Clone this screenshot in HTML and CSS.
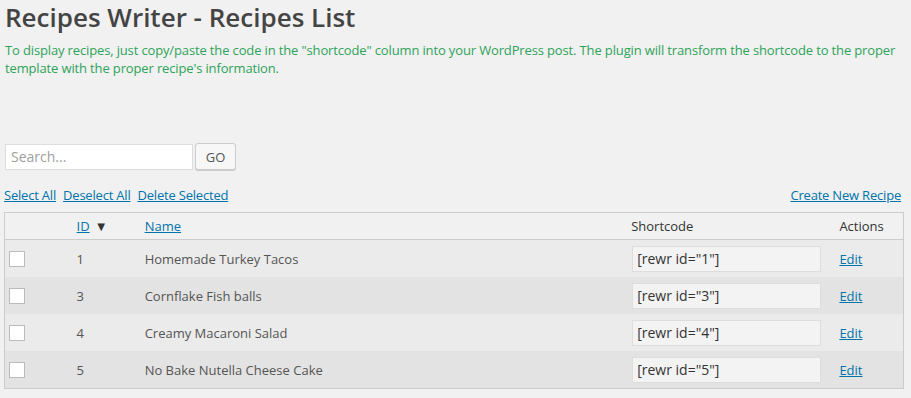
FILE: index.html
```html
<!DOCTYPE html>
<html lang="en">
<head>
  <meta charset="UTF-8" />
  <title>Recipes Writer - Recipes List</title>
  <link rel="stylesheet" href="styles.css">
</head>
<body>
  <div class="wrap">
    <h1>Recipes Writer - Recipes List</h1>
    <p class="intro">To display recipes, just copy/paste the code in the "shortcode" column into your WordPress post. The plugin will transform the shortcode to the proper template with the proper recipe's information.</p>

    <form class="search-box">
      <input type="text" class="search-input" placeholder="Search...">
      <button type="button" class="go-btn">GO</button>
    </form>

    <div class="bulk-row">
      <div class="bulk-links">
        <a href="#">Select All</a>
        <a href="#">Deselect All</a>
        <a href="#">Delete Selected</a>
      </div>
      <a href="#">Create New Recipe</a>
    </div>

    <table class="recipes">
      <colgroup>
        <col class="c-check">
        <col class="c-id">
        <col class="c-name">
        <col class="c-code">
        <col class="c-act">
      </colgroup>
      <thead>
        <tr>
          <th></th>
          <th><a href="#">ID</a><span class="sort">&#9660;</span></th>
          <th><a href="#">Name</a></th>
          <th>Shortcode</th>
          <th>Actions</th>
        </tr>
      </thead>
      <tbody>
        <tr>
          <td><span class="check"></span></td>
          <td>1</td>
          <td>Homemade Turkey Tacos</td>
          <td><input class="code" type="text" value='[rewr id="1"]' readonly></td>
          <td><a href="#">Edit</a></td>
        </tr>
        <tr>
          <td><span class="check"></span></td>
          <td>3</td>
          <td>Cornflake Fish balls</td>
          <td><input class="code" type="text" value='[rewr id="3"]' readonly></td>
          <td><a href="#">Edit</a></td>
        </tr>
        <tr>
          <td><span class="check"></span></td>
          <td>4</td>
          <td>Creamy Macaroni Salad</td>
          <td><input class="code" type="text" value='[rewr id="4"]' readonly></td>
          <td><a href="#">Edit</a></td>
        </tr>
        <tr>
          <td><span class="check"></span></td>
          <td>5</td>
          <td>No Bake Nutella Cheese Cake</td>
          <td><input class="code" type="text" value='[rewr id="5"]' readonly></td>
          <td><a href="#">Edit</a></td>
        </tr>
      </tbody>
    </table>
  </div>
</body>
</html>
```

FILE: styles.css
```css
html, body {
  margin: 0;
  padding: 0;
}

body {
  background: #f1f1f1;
  font-family: "Open Sans", sans-serif;
  font-size: 13px;
  color: #444;
}

.wrap {
  padding: 0 4px 0 4px;
}

a {
  color: #0073aa;
  text-decoration: underline;
}

h1 {
  margin: 0;
  padding: 0 0 0 1px;
  font-size: 26px;
  font-weight: 600;
  line-height: 35px;
  color: #444;
}

.intro {
  margin: 6px 0 0 1px;
  line-height: 18px;
  letter-spacing: -0.14px;
  color: #2ea35a;
}

.search-box {
  display: flex;
  align-items: center;
  gap: 2px;
  margin: 66px 0 0 1px;
}

.search-input {
  width: 188px;
  height: 26px;
  box-sizing: border-box;
  border: 1px solid #ddd;
  background: #fff;
  padding: 0 5px;
  font-family: "Open Sans", sans-serif;
  font-size: 14px;
  color: #333;
  outline: none;
}

.search-input::placeholder {
  color: #a0a0a0;
}

.go-btn {
  width: 41px;
  height: 27px;
  border: 1px solid #ccc;
  border-radius: 3px;
  background: #f7f7f7;
  box-shadow: 0 1px 0 #ccc;
  font-family: "Open Sans", sans-serif;
  font-size: 13px;
  color: #555;
  padding: 0;
}

.bulk-row {
  display: flex;
  justify-content: space-between;
  align-items: center;
  width: 897px;
  margin-top: 15px;
  height: 20px;
  letter-spacing: -0.2px;
}

.bulk-links {
  display: flex;
  gap: 7px;
}

.recipes {
  width: 900px;
  margin-top: 7px;
  table-layout: fixed;
  border-collapse: collapse;
  border: 1px solid #ccc;
}

.c-check { width: 64px; }
.c-id { width: 68px; }
.c-name { width: 486px; }
.c-code { width: 208px; }
.c-act { width: 72px; }

.recipes th {
  height: 26px;
  padding: 0 0 0 8px;
  text-align: left;
  font-weight: 400;
  color: #333;
  background: #f1f1f1;
  border-bottom: 1px solid #ccc;
}

.sort {
  font-size: 13px;
  color: #333;
  margin-left: 5px;
}

.recipes td {
  height: 37px;
  padding: 0 0 0 8px;
  color: #555;
  vertical-align: middle;
}

.recipes td:first-child {
  padding-left: 4px;
}

.recipes tbody tr:nth-child(odd) {
  background: #ebebeb;
}

.recipes tbody tr:nth-child(even) {
  background: #e3e3e3;
}

.check {
  display: block;
  width: 14px;
  height: 14px;
  border: 1px solid #bbb;
  background: #fff;
}

.code {
  display: block;
  width: 189px;
  height: 26px;
  box-sizing: border-box;
  margin-left: 1px;
  padding: 0 4px;
  border: 1px solid #ddd;
  background: #f3f3f3;
  font-family: "Open Sans", sans-serif;
  font-size: 14px;
  color: #333;
  outline: none;
}
```
